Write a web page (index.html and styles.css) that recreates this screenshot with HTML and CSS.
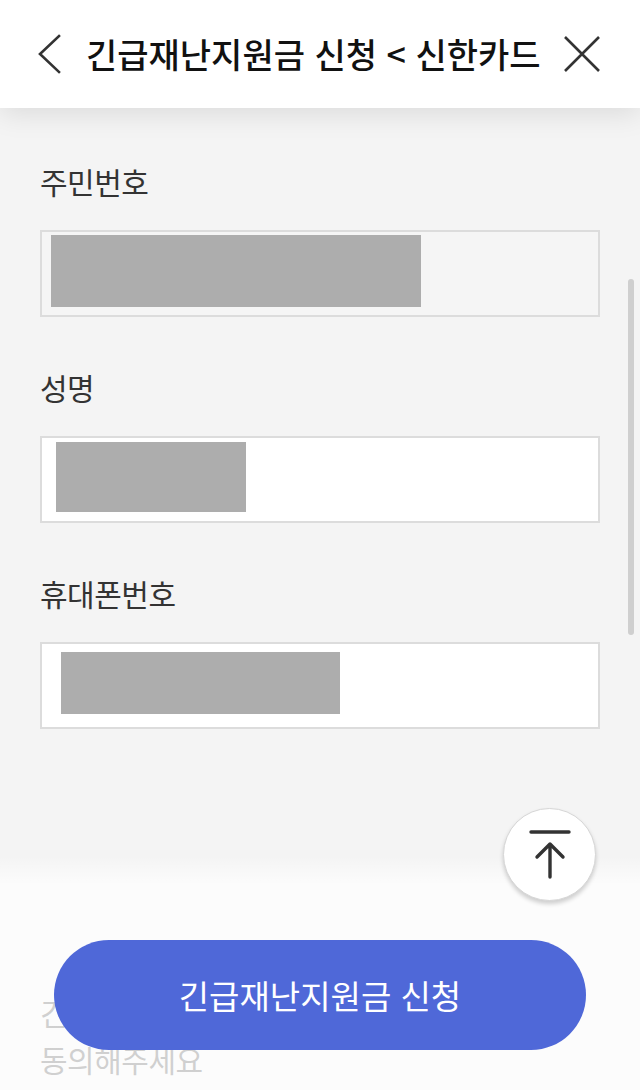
FILE: index.html
```html
<!DOCTYPE html>
<html lang="ko">
<head>
<meta charset="utf-8">
<title>긴급재난지원금 신청 &lt; 신한카드</title>
<link rel="stylesheet" href="styles.css">
</head>
<body>
<header class="topbar">
  <button class="icon-btn back" aria-label="뒤로">
    <svg width="24" height="40" viewBox="0 0 24 40"><path d="M21 2 L2 20 L21 38" fill="none" stroke="#333" stroke-width="2.6" stroke-linecap="square" stroke-linejoin="miter"/></svg>
  </button>
  <h1 class="title">긴급재난지원금 신청 &lt; 신한카드</h1>
  <button class="icon-btn close" aria-label="닫기">
    <svg width="40" height="40" viewBox="0 0 40 40"><path d="M3 3 L37 37 M37 3 L3 37" fill="none" stroke="#333" stroke-width="2.6"/></svg>
  </button>
</header>

<main class="content">
  <div class="field">
    <label class="label">주민번호</label>
    <div class="input disabled"><span class="mask mask-a"></span></div>
  </div>
  <div class="field">
    <label class="label">성명</label>
    <div class="input"><span class="mask mask-b"></span></div>
  </div>
  <div class="field">
    <label class="label">휴대폰번호</label>
    <div class="input"><span class="mask mask-c"></span></div>
  </div>
  <p class="notice">긴급재난지원금 신청을 위해 약관에<br>동의해주세요</p>
</main>

<div class="scrollbar"></div>

<div class="bottom-bar">
  <button class="submit">긴급재난지원금 신청</button>
</div>

<button class="to-top" aria-label="맨 위로">
  <svg width="44" height="52" viewBox="0 0 44 52"><path d="M3 3 H41 M22 15 V48 M9 28 L22 15 L35 28" fill="none" stroke="#333" stroke-width="3.4" stroke-linecap="round" stroke-linejoin="round"/></svg>
</button>
</body>
</html>
```

FILE: styles.css
```css
html, body {
  margin: 0;
  padding: 0;
  height: 1090px;
  overflow: hidden;
}
body {
  background: #f4f4f4;
  font-family: "Noto Sans CJK KR", "Noto Sans", sans-serif;
  color: #333;
  position: relative;
}
.topbar {
  height: 108px;
  background: #fff;
  display: flex;
  align-items: center;
  padding: 0 38px 0 38px;
  box-shadow: 0 6px 26px rgba(0, 0, 0, 0.10);
  position: relative;
  z-index: 2;
}
.icon-btn {
  border: 0;
  background: none;
  padding: 0;
  display: flex;
  cursor: pointer;
}
.back { margin-right: 24px; }
.close { margin-left: auto; }
.title {
  margin: 0;
  font-size: 34px;
  font-weight: 500;
  letter-spacing: 0;
  color: #111;
  line-height: 40px;
  white-space: nowrap;
}
.content {
  padding: 53px 40px 0 40px;
}
.field {
  margin-bottom: 50px;
}
.label {
  display: block;
  font-size: 30px;
  letter-spacing: -0.5px;
  line-height: 40px;
  color: #333;
  margin-bottom: 29px;
}
.input {
  height: 83px;
  border: 2px solid #dcdcdc;
  background: #fff;
  box-sizing: content-box;
  display: flex;
}
.input.disabled {
  background: #f5f5f5;
}
.mask {
  display: block;
  background: #adadad;
}
.mask-a { width: 370px; height: 72px; margin: 3px 0 0 9px; }
.mask-b { width: 190px; height: 70px; margin: 4px 0 0 14px; }
.mask-c { width: 279px; height: 62px; margin: 8px 0 0 19px; }
.notice {
  margin: 260px 0 0 0;
  font-size: 30px;
  letter-spacing: -0.5px;
  line-height: 47px;
  color: #333;
}
.scrollbar {
  position: absolute;
  top: 279px;
  right: 6px;
  width: 6px;
  height: 356px;
  border-radius: 3px;
  background: #cfcfcf;
}
.bottom-bar {
  position: absolute;
  left: 0;
  right: 0;
  top: 856px;
  bottom: 0;
  background: linear-gradient(to bottom, rgba(255,255,255,0) 0, rgba(255,255,255,0.77) 30px, rgba(255,255,255,0.77) 100%);
  display: flex;
  justify-content: center;
  align-items: flex-start;
  padding-top: 84px;
  box-sizing: border-box;
  z-index: 3;
}
.submit {
  width: 532px;
  height: 110px;
  border: 0;
  border-radius: 55px;
  background: #4f68d8;
  color: #fff;
  font-family: "Noto Sans CJK KR", "Noto Sans", sans-serif;
  font-size: 33px;
  letter-spacing: 0;
  font-weight: 400;
  padding: 0;
}
.to-top {
  position: absolute;
  left: 503px;
  top: 808px;
  width: 93px;
  height: 93px;
  border-radius: 50%;
  background: #fff;
  border: 1px solid #d6d6d6;
  box-shadow: 0 3px 4px rgba(0, 0, 0, 0.18);
  display: flex;
  align-items: center;
  justify-content: center;
  padding: 0;
  z-index: 4;
}
```
